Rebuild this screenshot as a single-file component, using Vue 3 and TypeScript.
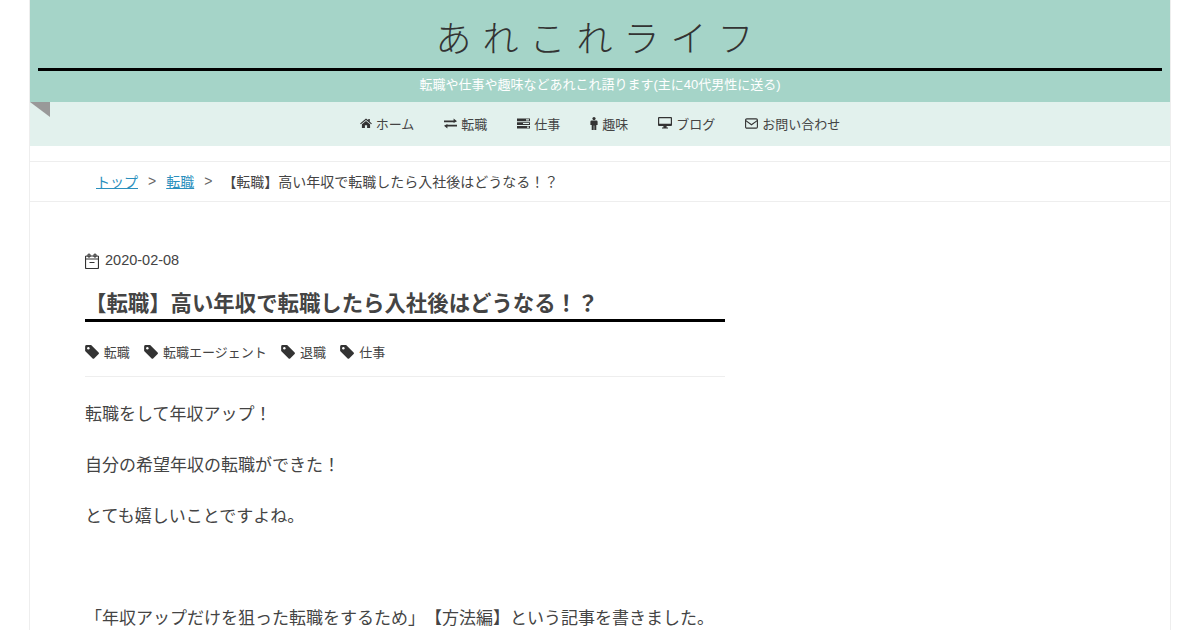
<script setup lang="ts">
interface NavItem {
  label: string;
  icon: string;
}

const navItems: NavItem[] = [
  { label: "ホーム", icon: "home" },
  { label: "転職", icon: "exchange" },
  { label: "仕事", icon: "tasks" },
  { label: "趣味", icon: "male" },
  { label: "ブログ", icon: "desktop" },
  { label: "お問い合わせ", icon: "mail" },
];

const tags: string[] = ["転職", "転職エージェント", "退職", "仕事"];

const paragraphs: string[] = [
  "転職をして年収アップ！",
  "自分の希望年収の転職ができた！",
  "とても嬉しいことですよね。",
  "",
  "「年収アップだけを狙った転職をするため」【方法編】という記事を書きました。",
];
</script>

<template>
  <div class="page">
    <header class="header">
      <h2 class="site-title">あれこれライフ</h2>
      <p class="site-desc">転職や仕事や趣味などあれこれ語ります(主に40代男性に送る)</p>
    </header>

    <nav class="nav">
      <span class="ribbon"></span>
      <a v-for="item in navItems" :key="item.label" class="nav-item">
        <svg v-if="item.icon === 'home'" class="nav-icon" width="12" height="10" viewBox="0 0 13 11">
          <path d="M6.5 0.5 L9 2.6 V1 H10.7 V4 L13 6 L12.2 6.9 L6.5 2.1 L0.8 6.9 L0 6 Z M2 7 L6.5 3.2 L11 7 V11 H7.7 V8 H5.3 V11 H2 Z" fill="#333" />
        </svg>
        <svg v-else-if="item.icon === 'exchange'" class="nav-icon" width="13" height="11" viewBox="0 0 13 11">
          <path d="M0 2.4 H9.6 V0.6 L13 3.3 L9.6 5 V4.2 H0 Z M13 6.8 H3.4 V6 L0 7.7 L3.4 10.4 V8.6 H13 Z" fill="#333" />
        </svg>
        <svg v-else-if="item.icon === 'tasks'" class="nav-icon" width="13" height="11" viewBox="0 0 13 11">
          <path d="M0 0.5 H13 V3.2 H0 Z M0 4.2 H13 V6.9 H0 Z M0 7.9 H13 V10.6 H0 Z" fill="#333" />
          <path d="M9 1.2 H12 V2.4 H9 Z M6 4.9 H12 V6.1 H6 Z M10 8.6 H12 V9.8 H10 Z" fill="#e2f1ed" />
        </svg>
        <svg v-else-if="item.icon === 'male'" class="nav-icon" width="8" height="13" viewBox="0 0 8 13">
          <circle cx="4" cy="1.6" r="1.6" fill="#333" />
          <path d="M1.6 3.6 H6.4 Q7.6 3.6 7.6 4.8 V8 H6.3 V13 H4.3 V8.5 H3.7 V13 H1.7 V8 H0.4 V4.8 Q0.4 3.6 1.6 3.6 Z" fill="#333" />
        </svg>
        <svg v-else-if="item.icon === 'desktop'" class="nav-icon" width="14" height="12" viewBox="0 0 14 12">
          <path d="M1 0 H13 Q14 0 14 1 V8 Q14 9 13 9 H8.6 V10.4 H10 V11.4 H4 V10.4 H5.4 V9 H1 Q0 9 0 8 V1 Q0 0 1 0 Z M1.2 1.2 V6.8 H12.8 V1.2 Z" fill="#333" />
        </svg>
        <svg v-else class="nav-icon" width="13" height="11" viewBox="0 0 13 11">
          <rect x="0.6" y="0.9" width="11.8" height="9.2" rx="1.2" fill="none" stroke="#333" stroke-width="1.1" />
          <path d="M0.8 2.6 L6.5 6.8 L12.2 2.6" fill="none" stroke="#333" stroke-width="1.1" />
        </svg>
        <span>{{ item.label }}</span>
      </a>
    </nav>

    <div class="breadcrumb">
      <a class="crumb-link">トップ</a>
      <span class="crumb-sep">&gt;</span>
      <a class="crumb-link">転職</a>
      <span class="crumb-sep">&gt;</span>
      <span class="crumb-current">【転職】高い年収で転職したら入社後はどうなる！？</span>
    </div>

    <main class="content">
      <article class="article">
        <div class="date">
          <svg width="14" height="16" viewBox="0 0 14 16">
            <path d="M1.5 3 H12.5 Q13.5 3 13.5 4 V14.5 Q13.5 15.5 12.5 15.5 H1.5 Q0.5 15.5 0.5 14.5 V4 Q0.5 3 1.5 3 Z M0.5 6 H13.5 M4.5 9.5 H9.5" fill="none" stroke="#333" stroke-width="1.2" />
            <path d="M3 1.2 H5 V4 H3 Z M9 1.2 H11 V4 H9 Z" fill="none" stroke="#333" stroke-width="1" />
          </svg>
          <span class="date-text">2020-02-08</span>
        </div>
        <h1 class="title">【転職】高い年収で転職したら入社後はどうなる！？</h1>
        <div class="tags">
          <span v-for="tag in tags" :key="tag" class="tag">
            <svg class="tag-icon" width="14.3" height="14" viewBox="0 0 14 14">
              <path d="M0 1.4 Q0 0 1.4 0 H6 L13.5 7.5 Q14.2 8.3 13.5 9 L9 13.5 Q8.2 14.2 7.5 13.5 L0 6 Z" fill="#333" />
              <circle cx="3.2" cy="3.2" r="1.2" fill="#fff" />
            </svg>
            <span>{{ tag }}</span>
          </span>
        </div>
        <div class="body">
          <p v-for="(text, i) in paragraphs" :key="i" class="para">{{ text }}</p>
        </div>
      </article>
    </main>
  </div>
</template>

<style>
html, body {
  margin: 0;
  height: 630px;
  overflow: hidden;
  background: #fff;
}
</style>

<style scoped>
.page {
  width: 1142px;
  height: 630px;
  margin: 0 auto;
  box-sizing: border-box;
  border-left: 1px solid #eee;
  border-right: 1px solid #eee;
  overflow: hidden;
  font-family: "Liberation Sans", "Noto Sans CJK JP", sans-serif;
  color: #444;
  text-spacing-trim: space-all;
}

.header {
  background: #a5d4c8;
  height: 102px;
  padding: 0 8px;
  text-align: center;
  box-sizing: border-box;
}

.site-title {
  margin: 0;
  height: 68px;
  border-bottom: 3px solid #000;
  color: #333;
  font-size: 36px;
  font-weight: 300;
  line-height: 80px;
  letter-spacing: 11px;
}

.site-desc {
  margin: 0;
  color: #fff;
  font-size: 13px;
  line-height: 28px;
}

.nav {
  position: relative;
  background: #e2f1ed;
  height: 44px;
  box-sizing: border-box;
  padding-bottom: 2px;
  display: flex;
  justify-content: center;
  align-items: center;
  gap: 30px;
  font-size: 13px;
}

.ribbon {
  position: absolute;
  left: 0;
  top: 0;
  width: 0;
  height: 0;
  border-top: 15px solid #999;
  border-left: 20px solid transparent;
}

.nav-item {
  display: flex;
  align-items: center;
  gap: 4px;
}

.breadcrumb {
  margin-top: 15px;
  height: 41px;
  box-sizing: border-box;
  border-top: 1px solid #eee;
  border-bottom: 1px solid #eee;
  padding-left: 66px;
  padding-bottom: 2px;
  display: flex;
  align-items: center;
  font-size: 14px;
}

.crumb-link {
  color: #2a8fbd;
  text-decoration: underline;
}

.crumb-sep {
  margin: 0 10px;
  color: #666;
}

.content {
  padding: 50px 55px 0;
}

.article {
  width: 640px;
}

.date {
  display: flex;
  align-items: center;
  gap: 6px;
  font-size: 14.5px;
  height: 18px;
}

.date-text {
  padding-bottom: 2px;
}

.title {
  margin: 16px 0 0;
  font-size: 21.4px;
  line-height: 36px;
  height: 33px;
  border-bottom: 3px solid #000;
}

.tags {
  display: flex;
  gap: 14.4px;
  height: 50px;
  padding-top: 4px;
  align-items: center;
  border-bottom: 1px solid #eee;
  font-size: 13px;
}

.tag {
  display: flex;
  align-items: center;
  gap: 4.5px;
}

.tag-icon {
  margin-top: 2px;
}

.body {
  padding-top: 12px;
}

.para {
  margin: 0;
  font-size: 17px;
  line-height: 51px;
  min-height: 51px;
  white-space: nowrap;
}
</style>
